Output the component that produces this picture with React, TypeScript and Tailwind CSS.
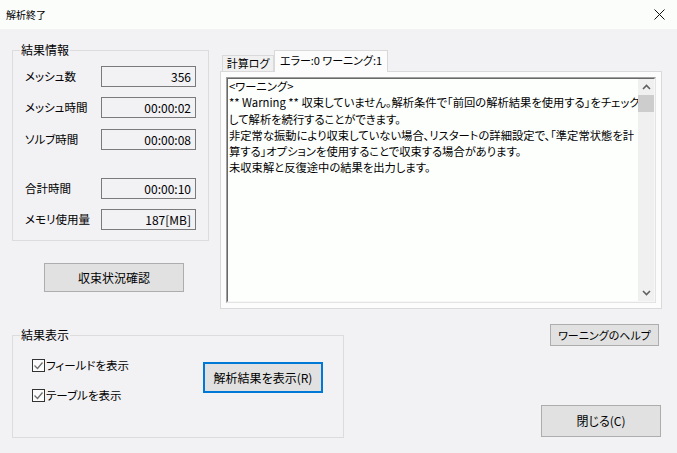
import React from "react";

function Field({ value }: { value: string }) {
  return (
    <div className="ml-auto mr-[12px] w-[95px] h-[21px] border border-[#7a7a7a] flex items-center justify-end pr-[4px] text-[12px] leading-none">
      {value}
    </div>
  );
}

function Row({ label, value, mt }: { label: string; value: string; mt: string }) {
  return (
    <div className={`flex items-center h-[21px] ${mt}`}>
      <span className="pl-[12px] text-[11.5px]">{label}</span>
      <Field value={value} />
    </div>
  );
}

function Check({ label }: { label: string }) {
  return (
    <div className="flex items-center h-[13px]">
      <div className="w-[13px] h-[13px] border border-[#333333] bg-[#fbfbfb] flex items-center justify-center">
        <svg width="11" height="11" viewBox="0 0 11 11">
          <path d="M1.5 5.5L4.5 8.5L9.5 2.5" fill="none" stroke="#6e6e6e" strokeWidth="1.3" />
        </svg>
      </div>
      <span className="ml-[1px] text-[11.5px] leading-none">{label}</span>
    </div>
  );
}

export default function App() {
  return (
    <div className="w-[677px] h-[453px] bg-[#f2f1f4] flex flex-col overflow-hidden text-black font-['Noto_Sans_CJK_JP','Noto_Sans',sans-serif] [font-feature-settings:'palt']">
      {/* title bar */}
      <div className="h-[29px] shrink-0 bg-[#fbfdfb] flex items-center justify-between pl-[6px] pr-[12px]">
        <span className="text-[10px] leading-none">解析終了</span>
        <svg width="11" height="11" viewBox="0 0 11 11">
          <path d="M0.5 0.5L10.5 10.5M10.5 0.5L0.5 10.5" stroke="#111" strokeWidth="1" />
        </svg>
      </div>

      {/* top row */}
      <div className="flex shrink-0">
        <div className="ml-[12px] w-[197px] flex flex-col">
          <div className="relative mt-[21px] h-[191px] border border-[#dcdcdc] pt-[15px]">
            <span className="absolute left-[7px] top-[-8px] px-[1px] bg-[#f2f1f4] text-[12px] leading-[14px]">結果情報</span>
            <Row label="メッシュ数" value="356" mt="" />
            <Row label="メッシュ時間" value="00:00:02" mt="mt-[10px]" />
            <Row label="ソルブ時間" value="00:00:08" mt="mt-[11px]" />
            <Row label="合計時間" value="00:00:10" mt="mt-[28px]" />
            <Row label="メモリ使用量" value="187[MB]" mt="mt-[10px]" />
          </div>
          <button className="mt-[22px] ml-[32px] w-[140px] h-[29px] bg-[#e1e1e1] border border-[#adadad] text-[12px] flex items-center justify-center">
            収束状況確認
          </button>
        </div>

        <div className="ml-[11px] w-[442px] flex flex-col">
          <div className="mt-[21px] h-[21px] flex items-end pl-[2px]">
            <div className="w-[52px] h-[16px] border border-b-0 border-[#d9d9d9] bg-[#f0f0f0] flex items-center justify-center text-[11px] leading-none">
              計算ログ
            </div>
            <div className="relative z-10 -mb-px w-[114px] h-[22px] border border-b-0 border-[#d9d9d9] bg-[#fcfcfc] flex items-center justify-center text-[11px] leading-none pb-[2px]">
              エラー:0 ワーニング:1
            </div>
          </div>
          <div className="h-[238px] border border-[#d9d9d9] bg-[#fcfcfc] p-[5px]">
            <div className="h-full border-t border-l border-[#a0a0a0] border-r-[#e3e3e3] border-b-[#e3e3e3] border-r border-b">
              <div className="h-full flex border-t border-l border-[#696969] border-r-[#f7f7f7] border-b-[#f7f7f7] border-r border-b bg-[#fdfffd]">
                <div className="flex-1 min-w-0 pl-[1px] -mt-[1px] text-[11.3px] leading-[16.25px] whitespace-pre">
                  <div>{"<ワーニング>"}</div>
                  <div>** Warning ** 収束していません。解析条件で「前回の解析結果を使用する」をチェック</div>
                  <div>して解析を続行することができます。</div>
                  <div>非定常な振動により収束していない場合、リスタートの詳細設定で、「準定常状態を計</div>
                  <div>算する」オプションを使用することで収束する場合があります。</div>
                  <div>未収束解と反復途中の結果を出力します。</div>
                </div>
                <div className="w-[16px] shrink-0 bg-[#f0f0f0] flex flex-col">
                  <div className="h-[16px] flex items-center justify-center">
                    <svg width="9" height="6" viewBox="0 0 9 6">
                      <path d="M1 5L4.5 1.5L8 5" fill="none" stroke="#606060" strokeWidth="1.6" />
                    </svg>
                  </div>
                  <div className="h-[17px] bg-[#cdcdcd]" />
                  <div className="flex-1" />
                  <div className="h-[16px] flex items-center justify-center">
                    <svg width="9" height="6" viewBox="0 0 9 6">
                      <path d="M1 1L4.5 4.5L8 1" fill="none" stroke="#606060" strokeWidth="1.6" />
                    </svg>
                  </div>
                </div>
              </div>
            </div>
          </div>
        </div>
      </div>

      {/* bottom row */}
      <div className="flex">
        <div className="relative ml-[12px] mt-[26px] w-[332px] h-[103px] border border-[#dcdcdc] flex items-start">
          <span className="absolute left-[7px] top-[-8px] px-[1px] bg-[#f2f1f4] text-[12px] leading-[14px]">結果表示</span>
          <div className="pl-[19px] pt-[23px] flex flex-col gap-[17px]">
            <Check label="フィールドを表示" />
            <Check label="テーブルを表示" />
          </div>
          <button className="ml-auto mr-[20px] mt-[26px] w-[120px] h-[31px] bg-[#e1e1e1] border-2 border-[#0078d7] text-[12px] flex items-center justify-center">
            解析結果を表示(R)
          </button>
        </div>
        <div className="flex-1 flex flex-col items-end">
          <button className="mt-[15px] mr-[18px] w-[109px] h-[22px] bg-[#e1e1e1] border border-[#adadad] text-[11px] flex items-center justify-center">
            ワーニングのヘルプ
          </button>
          <button className="mt-[59px] mr-[16px] w-[120px] h-[32px] bg-[#e1e1e1] border border-[#adadad] text-[12px] flex items-center justify-center">
            閉じる(C)
          </button>
        </div>
      </div>
    </div>
  );
}
